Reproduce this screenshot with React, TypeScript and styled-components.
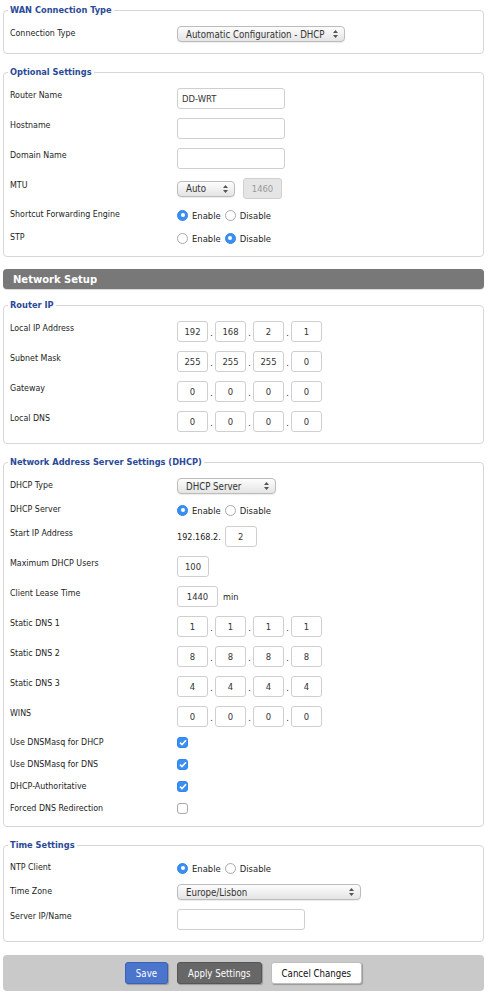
import styled, { createGlobalStyle } from 'styled-components'

const GlobalStyle = createGlobalStyle`
  body {
    margin: 0;
    background: #ffffff;
    font-family: 'DejaVu Sans Condensed', 'DejaVu Sans', sans-serif;
    font-stretch: condensed;
    color: #222222;
  }
`

const Page = styled.div`
  width: 481px;
  padding: 4px 4px 7px 3px;
  display: flex;
  flex-direction: column;
  gap: 12px;
`

const Fieldset = styled.fieldset`
  margin: 0;
  padding: 10px 0 11px 4px;
  border: 1px solid #d7d7d7;
  border-radius: 4px;
  min-width: 0;
`

const Legend = styled.legend`
  padding: 0 2px;
  font-size: 9.2px;
  line-height: 12px;
  font-weight: 700;
  color: #2b4a97;
`

const Rows = styled.div`
  padding-left: 2px;
  display: flex;
  flex-direction: column;
  gap: 9px;
`

const Row = styled.div`
  display: grid;
  grid-template-columns: 167px 1fr;
  align-items: start;
`

// $field: the row holds a text box or a select, whose label sits a pixel lower
const Label = styled.div<{ $field?: boolean }>`
  padding-top: ${(p) => (p.$field ? 1 : 0)}px;
  font-size: 8.8px;
  line-height: 13px;
  color: #1c1c1c;
`

const Controls = styled.div<{ $gap?: number }>`
  display: flex;
  align-items: center;
  gap: ${(p) => p.$gap ?? 0}px;
  font-size: 9px;
  color: #222;
`

const SelectBox = styled.div<{ $w: number }>`
  box-sizing: border-box;
  width: ${(p) => p.$w}px;
  height: 16px;
  padding: 0 6px 0 8px;
  display: flex;
  align-items: center;
  justify-content: space-between;
  border: 1px solid #bcbcbc;
  border-radius: 4px;
  background: linear-gradient(#fdfdfd, #e4e4e4);
  box-shadow: 0 1px 1px rgba(0, 0, 0, 0.08);
  font-size: 9.6px;
  color: #333;
`

const TextBox = styled.input<{ $w: number; $center?: boolean }>`
  box-sizing: border-box;
  width: ${(p) => p.$w}px;
  height: 21px;
  margin: 0;
  padding: 0 4px;
  border: 1px solid #cfcfcf;
  border-radius: 3px;
  background: #fff;
  font-family: inherit;
  font-stretch: condensed;
  font-size: 9.4px;
  color: #333;
  text-align: ${(p) => (p.$center ? 'center' : 'left')};
  outline: none;

  &:disabled {
    background: #e5e5e5;
    color: #9a9a9a;
  }
`

const Dot = styled.span`
  width: 7px;
  text-align: center;
  font-size: 9px;
  align-self: flex-end;
  padding-bottom: 4px;
`

const Option = styled.span`
  display: inline-flex;
  align-items: center;
  gap: 4px;
  height: 14px;
  font-size: 9.4px;
  color: #222;
`

const RadioMark = styled.span<{ $on: boolean }>`
  box-sizing: border-box;
  width: 11px;
  height: 11px;
  border-radius: 50%;
  display: inline-flex;
  align-items: center;
  justify-content: center;
  border: 1px solid ${(p) => (p.$on ? '#2f86ee' : '#a9a9a9')};
  background: ${(p) => (p.$on ? '#3b8ef2' : '#fff')};

  &::after {
    content: '';
    width: 4px;
    height: 4px;
    border-radius: 50%;
    background: #fff;
    display: ${(p) => (p.$on ? 'block' : 'none')};
  }
`

const CheckMark = styled.span<{ $on: boolean }>`
  box-sizing: border-box;
  width: 11px;
  height: 11px;
  margin-top: 1px;
  border-radius: 3px;
  display: inline-flex;
  align-items: center;
  justify-content: center;
  border: 1px solid ${(p) => (p.$on ? '#2f86ee' : '#a9a9a9')};
  background: ${(p) => (p.$on ? '#3b8ef2' : '#fff')};
`

const SectionBar = styled.h2`
  margin: 0 0 -2px;
  height: 20px;
  padding-left: 10px;
  display: flex;
  align-items: center;
  border-radius: 4px;
  background: #787878;
  box-shadow: 0 1px 1px rgba(0, 0, 0, 0.15);
  font-family: 'DejaVu Sans', sans-serif;
  font-stretch: normal;
  font-size: 10px;
  font-weight: 700;
  color: #fff;
`

const Footer = styled.div`
  height: 36px;
  margin-top: 1px;
  display: flex;
  align-items: center;
  justify-content: center;
  gap: 9px;
  border-radius: 4px;
  background: #c9c9c9;
`

const Button = styled.button<{ $kind: 'save' | 'apply' | 'cancel' }>`
  height: 22px;
  padding: 0 10px;
  border-radius: 3px;
  font-family: inherit;
  font-stretch: condensed;
  font-size: 9.6px;
  cursor: pointer;
  box-shadow: 1px 1px 1px rgba(0, 0, 0, 0.25);
  border: 1px solid
    ${(p) => (p.$kind === 'save' ? '#3b61b5' : p.$kind === 'apply' ? '#555' : '#bdbdbd')};
  background: ${(p) => (p.$kind === 'save' ? '#4b74cc' : p.$kind === 'apply' ? '#676767' : '#fff')};
  color: ${(p) => (p.$kind === 'cancel' ? '#111' : '#fff')};
`

function Select({ w, value }: { w: number; value: string }) {
  return (
    <SelectBox $w={w}>
      <span>{value}</span>
      <svg width="5" height="8" viewBox="0 0 5 8">
        <path d="M2.5 0 L5 3 H0 Z M0 5 H5 L2.5 8 Z" fill="#555" />
      </svg>
    </SelectBox>
  )
}

function Ip({ parts }: { parts: string[] }) {
  return (
    <Controls>
      {parts.map((part, i) => (
        <Controls key={i}>
          {i > 0 && <Dot>.</Dot>}
          <TextBox $w={31} $center readOnly value={part} />
        </Controls>
      ))}
    </Controls>
  )
}

function Radios({ on }: { on: 'enable' | 'disable' }) {
  return (
    <Controls $gap={4}>
      <Option>
        <RadioMark $on={on === 'enable'} />
        Enable
      </Option>
      <Option>
        <RadioMark $on={on === 'disable'} />
        Disable
      </Option>
    </Controls>
  )
}

function Check({ on }: { on: boolean }) {
  return (
    <CheckMark $on={on}>
      {on && (
        <svg width="8" height="7" viewBox="0 0 8 7">
          <path d="M1 3.6 L3 5.6 L7 1.2" stroke="#fff" strokeWidth="1.5" fill="none" />
        </svg>
      )}
    </CheckMark>
  )
}

const ipRows = [
  { label: 'Local IP Address', parts: ['192', '168', '2', '1'] },
  { label: 'Subnet Mask', parts: ['255', '255', '255', '0'] },
  { label: 'Gateway', parts: ['0', '0', '0', '0'] },
  { label: 'Local DNS', parts: ['0', '0', '0', '0'] },
]

const dnsRows = [
  { label: 'Static DNS 1', parts: ['1', '1', '1', '1'] },
  { label: 'Static DNS 2', parts: ['8', '8', '8', '8'] },
  { label: 'Static DNS 3', parts: ['4', '4', '4', '4'] },
  { label: 'WINS', parts: ['0', '0', '0', '0'] },
]

const checkRows = [
  { label: 'Use DNSMasq for DHCP', on: true },
  { label: 'Use DNSMasq for DNS', on: true },
  { label: 'DHCP-Authoritative', on: true },
  { label: 'Forced DNS Redirection', on: false },
]

export default function App() {
  return (
    <Page>
      <GlobalStyle />

      <Fieldset>
        <Legend>WAN Connection Type</Legend>
        <Rows>
          <Row>
            <Label $field>Connection Type</Label>
            <Select w={168} value="Automatic Configuration - DHCP" />
          </Row>
        </Rows>
      </Fieldset>

      <Fieldset>
        <Legend>Optional Settings</Legend>
        <Rows>
          <Row>
            <Label $field>Router Name</Label>
            <TextBox $w={108} readOnly value="DD-WRT" />
          </Row>
          <Row>
            <Label $field>Hostname</Label>
            <TextBox $w={108} readOnly value="" />
          </Row>
          <Row>
            <Label $field>Domain Name</Label>
            <TextBox $w={108} readOnly value="" />
          </Row>
          <Row>
            <Label $field>MTU</Label>
            <Controls $gap={8}>
              <Select w={58} value="Auto" />
              <TextBox $w={39} $center disabled value="1460" />
            </Controls>
          </Row>
          <Row>
            <Label>Shortcut Forwarding Engine</Label>
            <Radios on="enable" />
          </Row>
          <Row>
            <Label>STP</Label>
            <Radios on="disable" />
          </Row>
        </Rows>
      </Fieldset>

      <SectionBar>Network Setup</SectionBar>

      <Fieldset>
        <Legend>Router IP</Legend>
        <Rows>
          {ipRows.map((row) => (
            <Row key={row.label}>
              <Label $field>{row.label}</Label>
              <Ip parts={row.parts} />
            </Row>
          ))}
        </Rows>
      </Fieldset>

      <Fieldset>
        <Legend>Network Address Server Settings (DHCP)</Legend>
        <Rows>
          <Row>
            <Label $field>DHCP Type</Label>
            <Select w={99} value="DHCP Server" />
          </Row>
          <Row>
            <Label>DHCP Server</Label>
            <Radios on="enable" />
          </Row>
          <Row>
            <Label $field>Start IP Address</Label>
            <Controls $gap={4}>
              <span>192.168.2.</span>
              <TextBox $w={32} $center readOnly value="2" />
            </Controls>
          </Row>
          <Row>
            <Label $field>Maximum DHCP Users</Label>
            <TextBox $w={32} $center readOnly value="100" />
          </Row>
          <Row>
            <Label $field>Client Lease Time</Label>
            <Controls $gap={5}>
              <TextBox $w={41} $center readOnly value="1440" />
              <span>min</span>
            </Controls>
          </Row>
          {dnsRows.map((row) => (
            <Row key={row.label}>
              <Label $field>{row.label}</Label>
              <Ip parts={row.parts} />
            </Row>
          ))}
          {checkRows.map((row) => (
            <Row key={row.label}>
              <Label>{row.label}</Label>
              <Check on={row.on} />
            </Row>
          ))}
        </Rows>
      </Fieldset>

      <Fieldset>
        <Legend>Time Settings</Legend>
        <Rows>
          <Row>
            <Label>NTP Client</Label>
            <Radios on="enable" />
          </Row>
          <Row>
            <Label $field>Time Zone</Label>
            <Select w={184} value="Europe/Lisbon" />
          </Row>
          <Row>
            <Label $field>Server IP/Name</Label>
            <TextBox $w={128} readOnly value="" />
          </Row>
        </Rows>
      </Fieldset>

      <Footer>
        <Button type="button" $kind="save">Save</Button>
        <Button type="button" $kind="apply">Apply Settings</Button>
        <Button type="button" $kind="cancel">Cancel Changes</Button>
      </Footer>
    </Page>
  )
}
